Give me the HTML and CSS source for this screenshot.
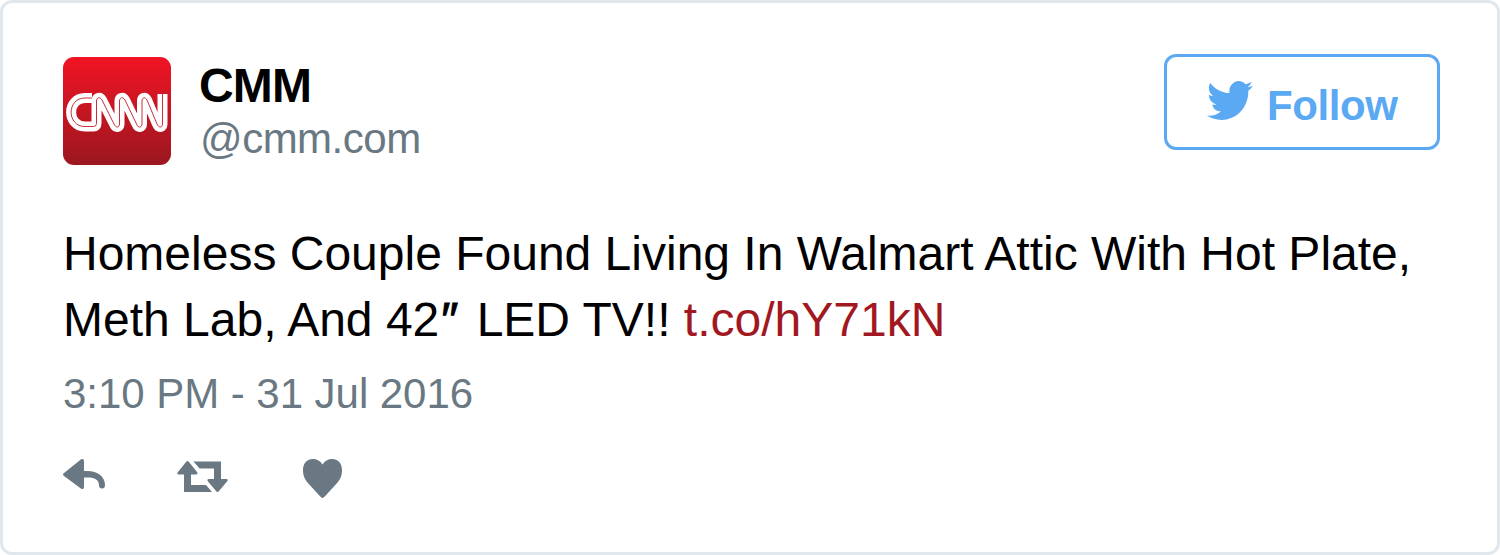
FILE: index.html
```html
<!DOCTYPE html>
<html lang="en">
<head>
<meta charset="utf-8">
<title>CMM on Twitter</title>
<link rel="stylesheet" href="styles.css">
</head>
<body>
<article class="tweet">
  <header class="header">
    <svg class="avatar" viewBox="0 0 108 108" role="img" aria-label="CMM">
      <defs><linearGradient id="red" x1="0" y1="0" x2="0" y2="1"><stop offset="0" stop-color="#f11424"/><stop offset="1" stop-color="#9b1720"/></linearGradient></defs>
      <rect width="108" height="108" rx="11" fill="url(#red)"/>
      <path class="logo-band" d="M29 41H22C3.500 41 3.500 69.500 22 69.500H30.500Q33.500 69.500 33.500 66.500V44C33.500 40.500 37 39.500 39 43L51 67C53 71.500 56.500 70.500 56.500 67V44C56.500 40.500 60 39.500 62 43L73.500 67C75.500 71.500 79 70.500 79 67V44C79 40.500 82 39.500 84 43L94 67C96 71.500 99.500 70.500 99.500 67V37"/>
      <path class="logo-line" d="M29 41H22C3.500 41 3.500 69.500 22 69.500H30.500Q33.500 69.500 33.500 66.500V44C33.500 40.500 37 39.500 39 43L51 67C53 71.500 56.500 70.500 56.500 67V44C56.500 40.500 60 39.500 62 43L73.500 67C75.500 71.500 79 70.500 79 67V44C79 40.500 82 39.500 84 43L94 67C96 71.500 99.500 70.500 99.500 67V37"/>
    </svg>
    <div class="author">
      <div class="name">CMM</div>
      <div class="handle">@cmm.com</div>
    </div>
    <button class="follow">
      <svg class="bird" viewBox="0 2.2 24 19.6" preserveAspectRatio="none"><path d="M23.953 4.57a10 10 0 01-2.825.775 4.958 4.958 0 002.163-2.723c-.951.555-2.005.959-3.127 1.184a4.92 4.92 0 00-8.384 4.482C7.69 8.095 4.067 6.13 1.64 3.162a4.822 4.822 0 00-.666 2.475c0 1.71.87 3.213 2.188 4.096a4.904 4.904 0 01-2.228-.616v.06a4.923 4.923 0 003.946 4.827 4.996 4.996 0 01-2.212.085 4.936 4.936 0 004.604 3.417 9.867 9.867 0 01-6.102 2.105c-.39 0-.779-.023-1.17-.067a13.995 13.995 0 007.557 2.209c9.053 0 13.998-7.496 13.998-13.985 0-.21 0-.42-.015-.63A9.935 9.935 0 0024 4.59z"/></svg>
      <span class="follow-label">Follow</span>
    </button>
  </header>
  <p class="text"><span class="line">Homeless Couple Found Living In Walmart Attic With Hot Plate,</span> <span class="line">Meth Lab, And 42<span class="inches">″</span> LED TV!! <a class="link">t.co/hY71kN</a></span></p>
  <div class="date">3:10 PM - 31 Jul 2016</div>
  <footer class="actions">
    <svg class="reply" viewBox="0 0 42 31"><path d="M17.500 .8Q21 -1.500 21 2.500V12H24C35 12 42 18 42 26Q42 29.500 39 29.500T36 26C36 20 30 18.500 25 18.500H21V27.500Q21 31.500 17.500 29.200L1 17Q-1 15.500 1 14Z"/></svg>
    <svg class="retweet" viewBox="0 0 51 31"><path d="M9 1Q10.500 -1 12 1L20 11Q21.500 13.500 18.500 13.500H14V24H29L35 31H7V13.500H2Q-1 13.500 1 11ZM16.500 .5H44V18H49Q52 18 50 20.500L42 30Q40.500 32 39 30L31 20.500Q29.500 18 32 18H37V7.500H22.500Z"/></svg>
    <svg class="heart" viewBox="0 0 39 39"><path d="M19.500 39Q18.500 39 17 37.200L4 23Q0 18 0 11.500C0 4 4 0 10 0Q16 0 19.500 5.500Q23 0 29 0C35 0 39 4 39 11.500Q39 18 35 23L22 37.200Q20.500 39 19.500 39Z"/></svg>
  </footer>
</article>
</body>
</html>
```
FILE: styles.css
```css
* { box-sizing: border-box; }
body { margin: 0; background: #fff; font-family: "Liberation Sans", Arial, sans-serif; }
.tweet { height: 555px; padding: 51px 57px 0 60px; border: 3px solid #e1e8ed; border-radius: 12px; background: #fff; }
.header { display: flex; align-items: flex-start; }
.avatar { width: 108px; height: 108px; margin: 3px 28px 0 0; }
.logo-band, .logo-line { fill: none; stroke-linejoin: round; }
.logo-band { stroke: #fff; stroke-width: 10px; }
.logo-line { stroke: #c41825; stroke-width: 0.9px; }
.author { flex: 1; padding-top: 5px; }
.name { font-size: 48px; font-weight: 700; line-height: 54px; letter-spacing: -0.8px; }
.handle { padding: 2px 0 0 1px; color: #697882; font-size: 42px; line-height: 48px; letter-spacing: -0.5px; }
.follow { display: flex; align-items: center; width: 276px; height: 96px; padding: 4px 0 0 40px; border: 3px solid #5ba9f3; border-radius: 12px; background: #fff; color: #5ba9f3; font: 700 42px/48px "Liberation Sans", Arial, sans-serif; }
.bird { width: 46px; height: 39px; margin: -8px 14px 0 0; fill: #5ba9f3; }
.follow-label { padding-top: 4px; letter-spacing: -0.4px; }
.text { margin: 56px 0 0; font-size: 48px; line-height: 66px; color: #000; }
.line { display: block; white-space: nowrap; }
.inches { display: inline-block; width: 24px; padding-left: 2px; -webkit-text-stroke: 1px #000; }
.link { color: #a11822; }
.date { margin-top: 17px; color: #697882; font-size: 42px; line-height: 48px; letter-spacing: -0.04px; }
.actions { display: flex; align-items: flex-start; margin-top: 41px; fill: #697882; }
.reply { width: 42px; height: 31px; }
.retweet { width: 51px; height: 31px; margin: 2px 0 0 72px; }
.heart { width: 39px; height: 39px; margin-left: 75px; }
```
